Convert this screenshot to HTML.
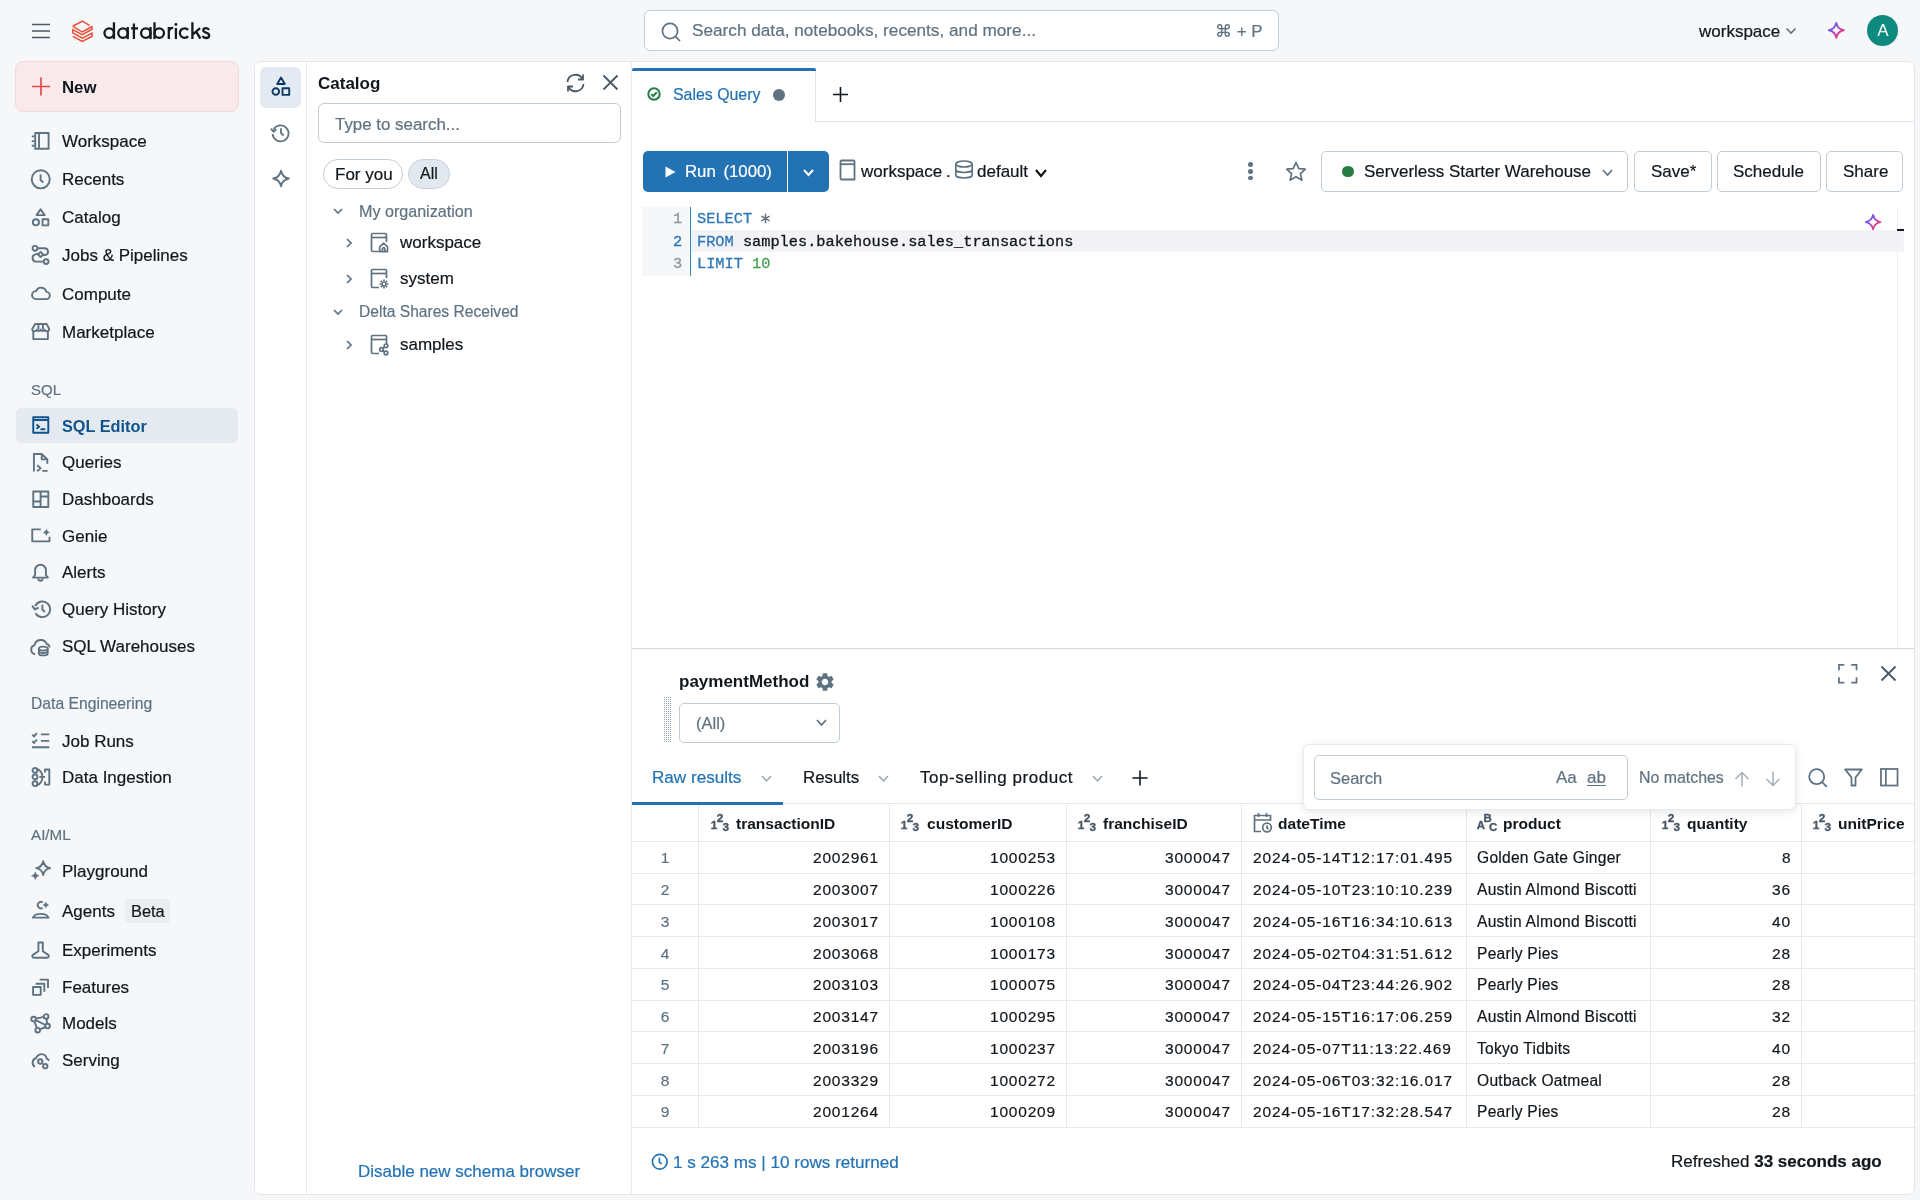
<!DOCTYPE html><html><head><meta charset="utf-8"><style>
html,body{margin:0;padding:0;width:1920px;height:1200px;overflow:hidden;background:#f6f7f9;}
body{position:relative;font-family:"Liberation Sans",sans-serif;}
.t{position:absolute;white-space:pre;line-height:1;-webkit-text-stroke:0.2px currentColor;will-change:transform;}
.b{position:absolute;box-sizing:border-box;}
.i{position:absolute;overflow:visible;will-change:transform;}
</style></head><body>
<svg class="i" style="left:31px;top:22px;" width="20" height="18" viewBox="0 0 20 18" fill="none"><path d="M1 2.5h18M1 9h18M1 15.5h18" stroke="#4a5866" stroke-width="1.7"/></svg>
<svg class="i" style="left:72px;top:19.7px;" width="22" height="23" viewBox="0 0 22 23" fill="none"><g stroke="#ec4b33" stroke-width="1.45" stroke-linejoin="miter" fill="none"><path d="M0.8 6.26 L10.35 1.17 L17.5 5.3"/><path d="M20.1 6.5 L10.35 12 L0.8 6.26"/><path d="M20.1 6.5 V9.2 L10.35 14.6 L0.8 9.6 V12.9 L10.35 18.1 L20.1 13.2 V16.2 L10.35 21.5 L0.8 16.3"/></g></svg>
<svg class="i" style="left:100px;top:20px" width="115" height="22" viewBox="0 0 115 22" fill="none"><g stroke="#161a1e" stroke-width="2.3" fill="none"><circle cx="9.2" cy="13.05" r="4.75"/><path d="M13.95 2.3 V19.1"/><circle cx="23" cy="13.05" r="4.75"/><path d="M27.75 7.0 V19.1"/><path d="M33.9 3.6 V19.1 M31.1 8.3 H38"/><circle cx="45.8" cy="13.05" r="4.75"/><path d="M50.55 7.0 V19.1"/><path d="M54.5 2.3 V19.1"/><circle cx="59.25" cy="13.05" r="4.75"/><path d="M68.8 7.0 V19.1 M68.8 12.6 C68.8 9.2 70.6 7.8 73.2 7.9"/><path d="M75.9 8.0 V19.1"/><path d="M88.13 9.87 A4.75 4.75 0 1 0 88.13 16.23"/><path d="M92.4 2.3 V19.1 M100.1 8.2 L93.2 14.1 M96.2 11.6 L100.4 18.6"/><path d="M109 10 C108.4 8.6 107.3 8.2 106.1 8.2 C104.4 8.2 103.3 9 103.3 10.3 C103.3 11.7 104.6 12.2 106.1 12.6 C108 13.1 109.2 13.8 109.2 15.5 C109.2 17.1 107.8 18 106 18 C104.4 18 103.2 17.3 102.6 16.1"/></g><circle cx="75.9" cy="4.4" r="1.45" fill="#161a1e"/></svg>
<div class="b" style="left:644px;top:10px;width:635px;height:41px;background:#fff;border:1px solid #c0ccd6;border-radius:6px;"></div>
<svg class="i" style="left:661px;top:22px;" width="20" height="20" viewBox="0 0 20 20" fill="none"><circle cx="9" cy="9" r="7.6" stroke="#5f7281" stroke-width="1.7"/><path d="M14.6 14.6 L19 19" stroke="#5f7281" stroke-width="1.7"/></svg>
<div class="t" style="left:691.50px;top:22.44px;font-size:17.2px;color:#5f7281;font-weight:400;font-family:'Liberation Sans', sans-serif;">Search data, notebooks, recents, and more...</div>
<div class="t" style="right:657.50px;top:22.61px;font-size:17px;color:#5f7281;font-weight:400;font-family:'Liberation Sans', sans-serif;text-align:right;">⌘ + P</div>
<div class="t" style="left:1698.50px;top:22.61px;font-size:17px;color:#11171c;font-weight:400;font-family:'Liberation Sans', sans-serif;">workspace</div>
<svg class="i" style="left:1785px;top:27px;" width="12" height="8" viewBox="0 0 12 8" fill="none"><path d="M1.5 1.5 L6 6 L10.5 1.5" stroke="#5f7281" stroke-width="1.6"/></svg>
<svg class="i" style="left:1826.9px;top:20.95px" width="18.6" height="18.6" viewBox="0 0 18.6 18.6" fill="none"><defs><linearGradient id="g1" x1="0.15" y1="0.15" x2="0.85" y2="0.85"><stop offset="0" stop-color="#4b6ee6"/><stop offset="0.5" stop-color="#b23fd2"/><stop offset="1" stop-color="#f2415a"/></linearGradient></defs><path d="M9.3 1.9000000000000004 C10.188 6.34 12.260000000000002 8.412 16.700000000000003 9.3 C12.260000000000002 10.188 10.188 12.260000000000002 9.3 16.700000000000003 C8.412 12.260000000000002 6.34 10.188 1.9000000000000004 9.3 C6.34 8.412 8.412 6.34 9.3 1.9000000000000004 Z" stroke="url(#g1)" stroke-width="1.9" stroke-linejoin="round"/></svg>
<div class="b" style="left:1867px;top:15px;width:31px;height:31px;background:#0f8a7e;border-radius:50%;"></div>
<div class="t" style="left:1882.50px;top:22.11px;font-size:17px;color:#fff;font-weight:400;font-family:'Liberation Sans', sans-serif;transform:translateX(-50%);-webkit-text-stroke:0;">A</div>
<div class="b" style="left:15px;top:61px;width:224px;height:51px;background:#f9e9ea;border:1px solid #f4dadc;border-radius:8px;"></div>
<svg class="i" style="left:31px;top:77px;" width="20" height="19" viewBox="0 0 20 19" fill="none"><path d="M10 0.5 V18.5 M1 9.5 H19" stroke="#e5484d" stroke-width="1.7"/></svg>
<div class="t" style="left:61.50px;top:79.78px;font-size:16.8px;color:#11171c;font-weight:700;font-family:'Liberation Sans', sans-serif;-webkit-text-stroke:0;">New</div>
<svg class="i" style="left:31px;top:131.8px;" width="20" height="20" viewBox="0 0 20 20" fill="none"><g stroke="#5f7281" stroke-width="1.9" fill="none" stroke-linejoin="round" stroke-linecap="butt"><rect x="4.2" y="1" width="13.4" height="15.8"/><path d="M8 1 V16.8 M0.8 4.4 H3.4 M0.8 9.1 H3.4 M0.8 13.8 H3.4"/></g></svg>
<div class="t" style="left:61.50px;top:132.91px;font-size:17px;color:#11171c;font-weight:400;font-family:'Liberation Sans', sans-serif;">Workspace</div>
<svg class="i" style="left:31px;top:169.6px;" width="20" height="20" viewBox="0 0 20 20" fill="none"><g stroke="#5f7281" stroke-width="1.9" fill="none" stroke-linejoin="round" stroke-linecap="butt"><circle cx="9.75" cy="9.35" r="9.05"/><path d="M9.6 4.4 V10.3 L12.4 12.4"/></g></svg>
<div class="t" style="left:61.50px;top:170.71px;font-size:17px;color:#11171c;font-weight:400;font-family:'Liberation Sans', sans-serif;">Recents</div>
<svg class="i" style="left:31px;top:207.5px;" width="20" height="20" viewBox="0 0 20 20" fill="none"><g stroke="#5f7281" stroke-width="1.9" fill="none" stroke-linejoin="round" stroke-linecap="butt"><path d="M9.6 1.2 L13.6 7.1 H5.6 Z"/><circle cx="4.9" cy="14.3" r="3.1"/><rect x="11.5" y="11.25" width="5.8" height="6.1"/></g></svg>
<div class="t" style="left:61.50px;top:208.61px;font-size:17px;color:#11171c;font-weight:400;font-family:'Liberation Sans', sans-serif;">Catalog</div>
<svg class="i" style="left:31px;top:246.2px;" width="20" height="20" viewBox="0 0 20 20" fill="none"><g stroke="#5f7281" stroke-width="1.9" fill="none" stroke-linejoin="round" stroke-linecap="butt"><circle cx="4" cy="2.3" r="2.4"/><circle cx="15.1" cy="15.6" r="2.4"/><path d="M6.4 2.3 H13.6 A3.4 3.4 0 0 1 15 8.8 L12.1 9.4"/><path d="M9.6 5.9 L12.2 8.5 L9.6 11.1 L7 8.5 Z"/><path d="M7.1 7.6 L4.4 8.3 A3.7 3.7 0 0 0 5.2 15.6 H12.7"/></g></svg>
<div class="t" style="left:61.50px;top:247.31px;font-size:17px;color:#11171c;font-weight:400;font-family:'Liberation Sans', sans-serif;">Jobs &amp; Pipelines</div>
<svg class="i" style="left:31px;top:284.4px;" width="20" height="20" viewBox="0 0 20 20" fill="none"><g stroke="#5f7281" stroke-width="1.9" fill="none" stroke-linejoin="round" stroke-linecap="butt"><path d="M5 15.1 H15 A3.6 3.6 0 0 0 15.4 7.9 A5.4 5.4 0 0 0 5.1 7.1 A4 4 0 0 0 5 15.1 Z"/></g></svg>
<div class="t" style="left:61.50px;top:285.51px;font-size:17px;color:#11171c;font-weight:400;font-family:'Liberation Sans', sans-serif;">Compute</div>
<svg class="i" style="left:31px;top:322.4px;" width="20" height="20" viewBox="0 0 20 20" fill="none"><g stroke="#5f7281" stroke-width="1.9" fill="none" stroke-linejoin="round" stroke-linecap="butt"><path d="M4.2 2 H15.6 L18.2 6.9 A2.3 2.3 0 0 1 13.7 7.7 A2.2 2.2 0 0 1 9.7 7.7 A2.2 2.2 0 0 1 5.7 7.7 A2.3 2.3 0 0 1 1.2 6.9 Z"/><path d="M2.3 8.6 V17.1 H16.9 V8.6 M7.4 2 V7.4 M11.9 2 V7.4"/></g></svg>
<div class="t" style="left:61.50px;top:323.51px;font-size:17px;color:#11171c;font-weight:400;font-family:'Liberation Sans', sans-serif;">Marketplace</div>
<div class="t" style="left:31.25px;top:381.70px;font-size:15px;color:#5f7281;font-weight:400;font-family:'Liberation Sans', sans-serif;">SQL</div>
<div class="b" style="left:15.5px;top:408px;width:222px;height:35px;background:#e5eaf1;border-radius:5px;"></div>
<svg class="i" style="left:31px;top:416.4px;" width="20" height="20" viewBox="0 0 20 20" fill="none"><g stroke="#0e538b" stroke-width="1.9" fill="none" stroke-linejoin="round" stroke-linecap="butt"><rect x="2.25" y="1.2" width="15.05" height="15.5"/><path d="M2.25 4 H17.3 M5.5 8.6 L8.2 10.7 L5.5 12.8 M9.5 13.2 H14.3"/></g></svg>
<div class="t" style="left:61.50px;top:418.10px;font-size:16.3px;color:#0e538b;font-weight:700;font-family:'Liberation Sans', sans-serif;-webkit-text-stroke:0;">SQL Editor</div>
<svg class="i" style="left:31px;top:453.25px;" width="20" height="20" viewBox="0 0 20 20" fill="none"><g stroke="#5f7281" stroke-width="1.9" fill="none" stroke-linejoin="round" stroke-linecap="butt"><path d="M2.9 18.6 V0.95 H10.75 L16.3 6.4 V10.8 M10.75 0.95 V6.4 H16.3"/><path d="M6.2 12.2 L9.6 15.2 L6.2 18.2 M11.3 17.9 H16.6"/></g></svg>
<div class="t" style="left:61.50px;top:454.36px;font-size:17px;color:#11171c;font-weight:400;font-family:'Liberation Sans', sans-serif;">Queries</div>
<svg class="i" style="left:31px;top:489.75px;" width="20" height="20" viewBox="0 0 20 20" fill="none"><g stroke="#5f7281" stroke-width="1.9" fill="none" stroke-linejoin="round" stroke-linecap="butt"><rect x="2.25" y="1.5" width="15.05" height="15.5"/><path d="M9.6 1.5 V17 M2.25 11.45 H9.6 M9.6 6.45 H17.3"/></g></svg>
<div class="t" style="left:61.50px;top:490.86px;font-size:17px;color:#11171c;font-weight:400;font-family:'Liberation Sans', sans-serif;">Dashboards</div>
<svg class="i" style="left:31px;top:526.4px;" width="20" height="20" viewBox="0 0 20 20" fill="none"><g stroke="#5f7281" stroke-width="1.9" fill="none" stroke-linejoin="round" stroke-linecap="butt"><path d="M9.8 3.35 H1.25 V15.35 H18.5 V10.8"/><path d="M15.4 2.4 C15.790000000000001 4.35 17.35 5.91 19.3 6.3 C17.35 6.6899999999999995 15.790000000000001 8.25 15.4 10.2 C15.01 8.25 13.450000000000001 6.6899999999999995 11.5 6.3 C13.450000000000001 5.91 15.01 4.35 15.4 2.4 Z" fill="#5f7281" stroke="none"/></g></svg>
<div class="t" style="left:61.50px;top:527.51px;font-size:17px;color:#11171c;font-weight:400;font-family:'Liberation Sans', sans-serif;">Genie</div>
<svg class="i" style="left:31px;top:563.25px;" width="20" height="20" viewBox="0 0 20 20" fill="none"><g stroke="#5f7281" stroke-width="1.9" fill="none" stroke-linejoin="round" stroke-linecap="butt"><path d="M4.1 12 V7.1 A5.4 5.4 0 0 1 14.9 7.1 V12 L16.9 14.6 H2.1 Z"/><path d="M7.3 15.5 A2.2 2.2 0 0 0 11.7 15.5"/></g></svg>
<div class="t" style="left:61.50px;top:564.36px;font-size:17px;color:#11171c;font-weight:400;font-family:'Liberation Sans', sans-serif;">Alerts</div>
<svg class="i" style="left:31px;top:600.1px;" width="20" height="20" viewBox="0 0 20 20" fill="none"><g stroke="#5f7281" stroke-width="1.9" fill="none" stroke-linejoin="round" stroke-linecap="butt"><path d="M4.2 6.2 A7.8 7.8 0 1 1 4.6 13.2"/><path d="M1.2 5.6 L3.8 9.4 L7.6 7.6"/><path d="M11.4 4.8 V9.5 L13.9 12"/></g></svg>
<div class="t" style="left:61.50px;top:601.21px;font-size:17px;color:#11171c;font-weight:400;font-family:'Liberation Sans', sans-serif;">Query History</div>
<svg class="i" style="left:31px;top:637.0px;" width="20" height="20" viewBox="0 0 20 20" fill="none"><g stroke="#5f7281" stroke-width="1.9" fill="none" stroke-linejoin="round" stroke-linecap="butt"><path d="M4.2 17.2 A4.6 4.6 0 0 1 3.6 8.2 A6.3 6.3 0 0 1 15.6 6.8 A4 4 0 0 1 18.6 10.5"/><ellipse cx="12.3" cy="11.6" rx="4.4" ry="2"/><path d="M7.9 11.6 V16.4 A4.4 2 0 0 0 16.7 16.4 V11.6 M7.9 14 A4.4 2 0 0 0 16.7 14"/></g></svg>
<div class="t" style="left:61.50px;top:638.11px;font-size:17px;color:#11171c;font-weight:400;font-family:'Liberation Sans', sans-serif;">SQL Warehouses</div>
<div class="t" style="left:31.25px;top:695.71px;font-size:15.7px;color:#5f7281;font-weight:400;font-family:'Liberation Sans', sans-serif;">Data Engineering</div>
<svg class="i" style="left:31px;top:731.4px;" width="20" height="20" viewBox="0 0 20 20" fill="none"><g stroke="#5f7281" stroke-width="1.9" fill="none" stroke-linejoin="round" stroke-linecap="butt"><path d="M1.3 3.6 L2.9 5.5 L5.9 2.2 M1.3 10 L2.9 11.9 L5.9 8.6 M9.9 3.35 H18.3 M9.9 9.9 H18.3 M1 16.2 H18.3"/></g></svg>
<div class="t" style="left:61.50px;top:732.51px;font-size:17px;color:#11171c;font-weight:400;font-family:'Liberation Sans', sans-serif;">Job Runs</div>
<svg class="i" style="left:31px;top:768.0px;" width="20" height="20" viewBox="0 0 20 20" fill="none"><g stroke="#5f7281" stroke-width="1.9" fill="none" stroke-linejoin="round" stroke-linecap="butt"><circle cx="4" cy="2.4" r="2.4"/><circle cx="4" cy="8.9" r="2.4"/><circle cx="4" cy="15.7" r="2.4"/><path d="M5.5 0.6 A9 9 0 0 1 5.5 17.5 M8.3 8.9 H14 M14 4.5 V1.5 H18.3 V16.6 H14 V13.5"/></g></svg>
<div class="t" style="left:61.50px;top:769.11px;font-size:17px;color:#11171c;font-weight:400;font-family:'Liberation Sans', sans-serif;">Data Ingestion</div>
<div class="t" style="left:31.25px;top:827.13px;font-size:15.2px;color:#5f7281;font-weight:400;font-family:'Liberation Sans', sans-serif;">AI/ML</div>
<svg class="i" style="left:31px;top:861.4px;" width="20" height="20" viewBox="0 0 20 20" fill="none"><g stroke="#5f7281" stroke-width="1.9" fill="none" stroke-linejoin="round" stroke-linecap="butt"><path d="M12.2 0.1999999999999993 C12.889999999999999 3.6499999999999995 15.649999999999999 6.409999999999999 19.1 7.1 C15.649999999999999 7.79 12.889999999999999 10.55 12.2 14.0 C11.51 10.55 8.75 7.79 5.299999999999999 7.1 C8.75 6.409999999999999 11.51 3.6499999999999995 12.2 0.1999999999999993 Z"/><path d="M4.3 10.899999999999999 C4.68 12.799999999999999 6.199999999999999 14.319999999999999 8.1 14.7 C6.199999999999999 15.08 4.68 16.599999999999998 4.3 18.5 C3.92 16.599999999999998 2.4 15.08 0.5 14.7 C2.4 14.319999999999999 3.92 12.799999999999999 4.3 10.899999999999999 Z" fill="#5f7281" stroke="#5f7281" stroke-width="0.6"/></g></svg>
<div class="t" style="left:61.50px;top:862.51px;font-size:17px;color:#11171c;font-weight:400;font-family:'Liberation Sans', sans-serif;">Playground</div>
<svg class="i" style="left:31px;top:901.4px;" width="20" height="20" viewBox="0 0 20 20" fill="none"><g stroke="#5f7281" stroke-width="1.9" fill="none" stroke-linejoin="round" stroke-linecap="butt"><path d="M11.6 6.9 A3.2 3.2 0 1 1 11.6 1.4"/><path d="M1.8 16.6 A8.3 5.4 0 0 1 17.6 16.6 Z"/><path d="M14.8 0.5999999999999996 C15.15 2.3499999999999996 16.55 3.7499999999999996 18.3 4.1 C16.55 4.449999999999999 15.15 5.85 14.8 7.6 C14.450000000000001 5.85 13.05 4.449999999999999 11.3 4.1 C13.05 3.7499999999999996 14.450000000000001 2.3499999999999996 14.8 0.5999999999999996 Z" fill="#5f7281" stroke="none"/></g></svg>
<div class="t" style="left:61.50px;top:902.51px;font-size:17px;color:#11171c;font-weight:400;font-family:'Liberation Sans', sans-serif;">Agents</div>
<svg class="i" style="left:31px;top:940.75px;" width="20" height="20" viewBox="0 0 20 20" fill="none"><g stroke="#5f7281" stroke-width="1.9" fill="none" stroke-linejoin="round" stroke-linecap="butt"><path d="M7.4 10.2 V1.5 H11.8 V10.2 L16.9 13.6 A1.7 1.7 0 0 1 16 16.8 H3.1 A1.7 1.7 0 0 1 2.2 13.6 Z"/></g></svg>
<div class="t" style="left:61.50px;top:941.86px;font-size:17px;color:#11171c;font-weight:400;font-family:'Liberation Sans', sans-serif;">Experiments</div>
<svg class="i" style="left:31px;top:977.6px;" width="20" height="20" viewBox="0 0 20 20" fill="none"><g stroke="#5f7281" stroke-width="1.9" fill="none" stroke-linejoin="round" stroke-linecap="butt"><rect x="2.1" y="9" width="7.65" height="7.9"/><path d="M4.7 5.7 H13.3 V13.8 M8.7 1.6 H17 V10"/></g></svg>
<div class="t" style="left:61.50px;top:978.71px;font-size:17px;color:#11171c;font-weight:400;font-family:'Liberation Sans', sans-serif;">Features</div>
<svg class="i" style="left:31px;top:1014.25px;" width="20" height="20" viewBox="0 0 20 20" fill="none"><g stroke="#5f7281" stroke-width="1.9" fill="none" stroke-linejoin="round" stroke-linecap="butt"><circle cx="2.6" cy="5.05" r="2.3"/><circle cx="15.1" cy="2.45" r="2.3"/><circle cx="16.6" cy="12.05" r="2.3"/><circle cx="6.7" cy="16.15" r="2.3"/><path d="M4.8 4.6 L12.9 2.9 M4.6 6.1 L14.6 11 M3.3 7.3 L5.9 13.9 M15.5 4.7 L16.2 9.8 M14.5 13 L8.9 15.3"/></g></svg>
<div class="t" style="left:61.50px;top:1015.36px;font-size:17px;color:#11171c;font-weight:400;font-family:'Liberation Sans', sans-serif;">Models</div>
<svg class="i" style="left:31px;top:1051.1px;" width="20" height="20" viewBox="0 0 20 20" fill="none"><g stroke="#5f7281" stroke-width="1.9" fill="none" stroke-linejoin="round" stroke-linecap="butt"><path d="M3.8 15.9 C0.4 13.6 1.1 8.2 5 7.3 C6.2 3.3 11.6 1.6 14.5 4.9 C15.2 5.8 15.6 6.8 15.7 7.6 L18.3 9.6"/><circle cx="9.3" cy="10.5" r="2.2"/><circle cx="14.25" cy="15.2" r="2.2"/></g></svg>
<div class="t" style="left:61.50px;top:1052.21px;font-size:17px;color:#11171c;font-weight:400;font-family:'Liberation Sans', sans-serif;">Serving</div>
<div class="b" style="left:125px;top:898.5px;width:45px;height:24px;background:#ebeef1;border-radius:4px;"></div>
<div class="t" style="left:130.60px;top:903.02px;font-size:16.4px;color:#11171c;font-weight:400;font-family:'Liberation Sans', sans-serif;">Beta</div>
<div class="b" style="left:254px;top:61px;width:1661px;height:1134px;background:#fff;border:1px solid #e4e6e9;border-radius:7px;"></div>
<div class="b" style="left:306px;top:62px;width:1px;height:1132px;background:#e8eaec;"></div>
<div class="b" style="left:260px;top:67px;width:41px;height:41px;background:#e4eaf1;border-radius:6px;"></div>
<svg class="i" style="left:271px;top:76px;" width="20" height="21" viewBox="0 0 20 21" fill="none"><g stroke="#0e3b66" stroke-width="1.9" fill="none" stroke-linejoin="round"><path d="M10 1.5 L13.8 8 H6.2 Z"/><circle cx="4.8" cy="15.5" r="3.3"/><rect x="11.5" y="12.2" width="6.7" height="6.7"/></g></svg>
<svg class="i" style="left:270px;top:123px;" width="21" height="20" viewBox="0 0 21 20" fill="none"><g stroke="#5f7281" stroke-width="1.8" fill="none" stroke-linejoin="round"><path d="M3.6 6.5 A8 8 0 1 1 2.6 11"/><path d="M1 5.6 L3.5 8.8 L6.4 6.3"/><path d="M11 5.2 V10 L13.6 12.6"/></g></svg>
<svg class="i" style="left:270px;top:168px;" width="22" height="22" viewBox="0 0 22 22" fill="none"><path d="M11 2.7 C11.78 6.6 14.9 9.72 18.8 10.5 C14.9 11.28 11.78 14.4 11 18.3 C10.22 14.4 7.1 11.28 3.2 10.5 C7.1 9.72 10.22 6.6 11 2.7 Z" stroke="#5f7281" stroke-width="1.8" stroke-linejoin="round"/></svg>
<div class="b" style="left:631px;top:62px;width:1px;height:1132px;background:#e8eaec;"></div>
<div class="t" style="left:318.40px;top:74.61px;font-size:17px;color:#11171c;font-weight:700;font-family:'Liberation Sans', sans-serif;-webkit-text-stroke:0;">Catalog</div>
<svg class="i" style="left:565px;top:73px;" width="21" height="20" viewBox="0 0 21 20" fill="none"><g stroke="#4a5866" stroke-width="1.8" fill="none"><path d="M2.5 9 A8 8 0 0 1 17.5 6"/><path d="M18.5 11 A8 8 0 0 1 3.5 14"/><path d="M18 1.5 V6.5 H13" stroke-linejoin="round"/><path d="M3 18.5 V13.5 H8" stroke-linejoin="round"/></g></svg>
<svg class="i" style="left:602px;top:74px;" width="17" height="17" viewBox="0 0 17 17" fill="none"><path d="M1.5 1.5 L15.5 15.5 M15.5 1.5 L1.5 15.5" stroke="#4a5866" stroke-width="1.8"/></svg>
<div class="b" style="left:318px;top:103px;width:303px;height:40px;background:#fff;border:1px solid #c0ccd6;border-radius:6px;"></div>
<div class="t" style="left:334.70px;top:116.89px;font-size:16.9px;color:#5f7281;font-weight:400;font-family:'Liberation Sans', sans-serif;">Type to search...</div>
<div class="b" style="left:323px;top:159px;width:80px;height:30px;background:#fff;border:1px solid #c0ccd6;border-radius:15px;"></div>
<div class="t" style="left:334.70px;top:165.61px;font-size:17px;color:#11171c;font-weight:400;font-family:'Liberation Sans', sans-serif;">For you</div>
<div class="b" style="left:408px;top:159px;width:42px;height:30px;background:#e2e8ef;border:1px solid #c8d2dc;border-radius:15px;"></div>
<div class="t" style="left:420.00px;top:166.46px;font-size:16px;color:#11171c;font-weight:400;font-family:'Liberation Sans', sans-serif;">All</div>
<svg class="i" style="left:333px;top:207.5px;" width="10" height="6" viewBox="0 0 10 6" fill="none"><path d="M1 1 L5.0 5 L9 1" stroke="#5f7281" stroke-width="1.7" fill="none"/></svg>
<div class="t" style="left:358.70px;top:202.62px;font-size:16.1px;color:#5f7281;font-weight:400;font-family:'Liberation Sans', sans-serif;">My organization</div>
<svg class="i" style="left:345.5px;top:238px;" width="6" height="10" viewBox="0 0 6 10" fill="none"><path d="M1 1 L5 5.0 L1 9" stroke="#5f7281" stroke-width="1.7" fill="none"/></svg>
<svg class="i" style="left:370px;top:232px;" width="19" height="21" viewBox="0 0 19 21" fill="none"><g stroke="#5f7281" stroke-width="1.7" fill="none" stroke-linejoin="round"><path d="M9 19.5 H2.8 A1.3 1.3 0 0 1 1.5 18.2 V2.5 A1 1 0 0 1 2.5 1.5 H15.5 A1 1 0 0 1 16.5 2.5 V10"/><path d="M1.5 5.5 H16.5"/><path d="M9.7 19.6 V14.8 L13.6 11.2 L17.5 14.8 V19.6 Z"/><path d="M12.4 19.6 V16.9 A1.2 1.2 0 0 1 14.8 16.9 V19.6"/></g></svg>
<div class="t" style="left:399.50px;top:234.11px;font-size:17px;color:#11171c;font-weight:400;font-family:'Liberation Sans', sans-serif;">workspace</div>
<svg class="i" style="left:345.5px;top:274px;" width="6" height="10" viewBox="0 0 6 10" fill="none"><path d="M1 1 L5 5.0 L1 9" stroke="#5f7281" stroke-width="1.7" fill="none"/></svg>
<svg class="i" style="left:370px;top:268px;" width="19" height="21" viewBox="0 0 19 21" fill="none"><g stroke="#5f7281" stroke-width="1.7" fill="none" stroke-linejoin="round"><path d="M9 19.5 H2.8 A1.3 1.3 0 0 1 1.5 18.2 V2.5 A1 1 0 0 1 2.5 1.5 H15.5 A1 1 0 0 1 16.5 2.5 V10"/><path d="M1.5 5.5 H16.5"/><circle cx="14" cy="16" r="2"/><path d="M14 11.5 V13 M14 19 V20.5 M9.5 16 H11 M17 16 H18.5 M10.8 12.8 L11.9 13.9 M16.1 18.1 L17.2 19.2 M10.8 19.2 L11.9 18.1 M16.1 13.9 L17.2 12.8"/></g></svg>
<div class="t" style="left:399.50px;top:269.81px;font-size:17px;color:#11171c;font-weight:400;font-family:'Liberation Sans', sans-serif;">system</div>
<svg class="i" style="left:333px;top:308.5px;" width="10" height="6" viewBox="0 0 10 6" fill="none"><path d="M1 1 L5.0 5 L9 1" stroke="#5f7281" stroke-width="1.7" fill="none"/></svg>
<div class="t" style="left:358.70px;top:303.54px;font-size:15.6px;color:#5f7281;font-weight:400;font-family:'Liberation Sans', sans-serif;">Delta Shares Received</div>
<svg class="i" style="left:345.5px;top:340px;" width="6" height="10" viewBox="0 0 6 10" fill="none"><path d="M1 1 L5 5.0 L1 9" stroke="#5f7281" stroke-width="1.7" fill="none"/></svg>
<svg class="i" style="left:370px;top:334px;" width="19" height="21" viewBox="0 0 19 21" fill="none"><g stroke="#5f7281" stroke-width="1.7" fill="none" stroke-linejoin="round"><path d="M9 19.5 H2.8 A1.3 1.3 0 0 1 1.5 18.2 V2.5 A1 1 0 0 1 2.5 1.5 H15.5 A1 1 0 0 1 16.5 2.5 V10"/><path d="M1.5 5.5 H16.5"/><circle cx="16" cy="11.8" r="1.8"/><circle cx="11.5" cy="15.5" r="1.8"/><circle cx="16" cy="19" r="1.8"/><path d="M13 14.6 L14.6 12.8 M13 16.5 L14.6 18.2"/></g></svg>
<div class="t" style="left:399.50px;top:336.11px;font-size:17px;color:#11171c;font-weight:400;font-family:'Liberation Sans', sans-serif;">samples</div>
<div class="t" style="left:358.00px;top:1163.21px;font-size:17px;color:#2272b4;font-weight:400;font-family:'Liberation Sans', sans-serif;">Disable new schema browser</div>
<div class="b" style="left:815px;top:121px;width:1099px;height:1px;background:#dde3e8;"></div>
<div class="b" style="left:815px;top:70px;width:1px;height:52px;background:#dde3e8;"></div>
<div class="b" style="left:632px;top:68px;width:184px;height:3px;background:#2272b4;border-radius:2px 2px 0 0;"></div>
<svg class="i" style="left:647px;top:87px;" width="14" height="14" viewBox="0 0 14 14" fill="none"><circle cx="7" cy="7" r="5.7" stroke="#277c43" stroke-width="2" fill="none"/><path d="M4.2 7.1 L6.2 9.1 L9.8 5.3" stroke="#277c43" stroke-width="2" fill="none"/></svg>
<div class="t" style="left:672.50px;top:86.54px;font-size:15.9px;color:#2272b4;font-weight:400;font-family:'Liberation Sans', sans-serif;">Sales Query</div>
<div class="b" style="left:773px;top:88.5px;width:12px;height:12px;background:#5f7281;border-radius:50%;"></div>
<svg class="i" style="left:832px;top:86px;" width="17" height="17" viewBox="0 0 17 17" fill="none"><path d="M8.5 1 V16 M1 8.5 H16" stroke="#11171c" stroke-width="1.6"/></svg>
<div class="b" style="left:642.5px;top:151px;width:186px;height:41px;background:#2272b4;border-radius:5px;"></div>
<svg class="i" style="left:664px;top:165px;" width="13" height="14" viewBox="0 0 13 14" fill="none"><path d="M1.5 1.5 L11.5 7 L1.5 12.5 Z" fill="#fff"/></svg>
<div class="t" style="left:685.00px;top:163.78px;font-size:16.8px;color:#fff;font-weight:400;font-family:'Liberation Sans', sans-serif;word-spacing:3px;">Run (1000)</div>
<div class="b" style="left:786.5px;top:151px;width:1.3px;height:41px;background:#fff;"></div>
<svg class="i" style="left:802.5px;top:168.5px;" width="11" height="7" viewBox="0 0 11 7" fill="none"><path d="M1 1 L5.5 6 L10 1" stroke="#fff" stroke-width="2" fill="none"/></svg>
<svg class="i" style="left:839px;top:158.5px;" width="17" height="22" viewBox="0 0 17 22" fill="none"><g stroke="#5f7281" stroke-width="1.8" fill="none" stroke-linejoin="round"><path d="M2.8 20.5 A1.3 1.3 0 0 1 1.5 19.2 V2.5 A1 1 0 0 1 2.5 1.5 H14.5 A1 1 0 0 1 15.5 2.5 V20.5 Z"/><path d="M1.5 5.2 H15.5"/></g></svg>
<div class="t" style="left:861.25px;top:162.51px;font-size:17px;color:#11171c;font-weight:400;font-family:'Liberation Sans', sans-serif;">workspace</div>
<div class="t" style="left:946.00px;top:162.51px;font-size:17px;color:#11171c;font-weight:400;font-family:'Liberation Sans', sans-serif;">.</div>
<svg class="i" style="left:953.5px;top:159.5px;" width="20" height="19" viewBox="0 0 20 19" fill="none"><g stroke="#5f7281" stroke-width="1.7" fill="none"><ellipse cx="10" cy="4" rx="8.2" ry="3"/><path d="M1.8 4 V15 A8.2 3 0 0 0 18.2 15 V4 M1.8 9.5 A8.2 3 0 0 0 18.2 9.5"/></g></svg>
<div class="t" style="left:977.00px;top:162.51px;font-size:17px;color:#11171c;font-weight:400;font-family:'Liberation Sans', sans-serif;">default</div>
<svg class="i" style="left:1034.5px;top:168.5px;" width="12" height="8" viewBox="0 0 12 8" fill="none"><path d="M1 1 L6.0 7 L11 1" stroke="#11171c" stroke-width="2.2" fill="none"/></svg>
<div class="b" style="left:1248px;top:162.29999999999998px;width:4.6px;height:4.6px;background:#5f7281;border-radius:50%;"></div>
<div class="b" style="left:1248px;top:168.95px;width:4.6px;height:4.6px;background:#5f7281;border-radius:50%;"></div>
<div class="b" style="left:1248px;top:175.6px;width:4.6px;height:4.6px;background:#5f7281;border-radius:50%;"></div>
<svg class="i" style="left:1285px;top:160.5px;" width="22" height="21" viewBox="0 0 22 21" fill="none"><path d="M11 1.5 L13.8 7.6 L20.3 8.2 L15.4 12.6 L16.9 19.2 L11 15.8 L5.1 19.2 L6.6 12.6 L1.7 8.2 L8.2 7.6 Z" stroke="#5f7281" stroke-width="1.7" stroke-linejoin="round" fill="none"/></svg>
<div class="b" style="left:1321px;top:151px;width:307px;height:41px;background:#fff;border:1px solid #c0ccd6;border-radius:5px;"></div>
<div class="b" style="left:1342.2px;top:165.5px;width:11.7px;height:11.7px;background:#277c43;border-radius:50%;"></div>
<div class="t" style="left:1363.75px;top:163.11px;font-size:17px;color:#11171c;font-weight:400;font-family:'Liberation Sans', sans-serif;">Serverless Starter Warehouse</div>
<svg class="i" style="left:1601.5px;top:168.5px;" width="11" height="7" viewBox="0 0 11 7" fill="none"><path d="M1 1 L5.5 6 L10 1" stroke="#5f7281" stroke-width="1.6" fill="none"/></svg>
<div class="b" style="left:1634px;top:151px;width:77.5px;height:41px;background:#fff;border:1px solid #c0ccd6;border-radius:5px;"></div>
<div class="t" style="left:1651.00px;top:163.11px;font-size:17px;color:#11171c;font-weight:400;font-family:'Liberation Sans', sans-serif;">Save*</div>
<div class="b" style="left:1717px;top:151px;width:103.59999999999991px;height:41px;background:#fff;border:1px solid #c0ccd6;border-radius:5px;"></div>
<div class="t" style="left:1733.40px;top:163.11px;font-size:17px;color:#11171c;font-weight:400;font-family:'Liberation Sans', sans-serif;">Schedule</div>
<div class="b" style="left:1826px;top:151px;width:77px;height:41px;background:#fff;border:1px solid #c0ccd6;border-radius:5px;"></div>
<div class="t" style="left:1843.00px;top:163.11px;font-size:17px;color:#11171c;font-weight:400;font-family:'Liberation Sans', sans-serif;">Share</div>
<div class="b" style="left:641.6px;top:207px;width:47px;height:69px;background:#f6f7f9;"></div>
<div class="b" style="left:689.5px;top:207px;width:1.6px;height:69px;background:#3b82c4;"></div>
<div class="b" style="left:691.1px;top:230px;width:1212.6px;height:22px;background:#f2f2f7;"></div>
<svg class="i" style="left:1863.9px;top:213.1px" width="18.2" height="18.2" viewBox="0 0 18.2 18.2" fill="none"><defs><linearGradient id="g2" x1="0.15" y1="0.15" x2="0.85" y2="0.85"><stop offset="0" stop-color="#4b6ee6"/><stop offset="0.5" stop-color="#b23fd2"/><stop offset="1" stop-color="#f2415a"/></linearGradient></defs><path d="M9.1 1.7999999999999998 C9.975999999999999 6.18 12.02 8.224 16.4 9.1 C12.02 9.975999999999999 9.975999999999999 12.02 9.1 16.4 C8.224 12.02 6.18 9.975999999999999 1.7999999999999998 9.1 C6.18 8.224 8.224 6.18 9.1 1.7999999999999998 Z" stroke="url(#g2)" stroke-width="1.8" stroke-linejoin="round"/></svg>
<div class="b" style="left:1896.5px;top:207px;width:1px;height:441px;background:#eceef1;"></div>
<div class="b" style="left:1896.5px;top:229px;width:7.2px;height:2px;background:#11171c;"></div>
<div class="t" style="right:1237.50px;top:211.77px;font-size:15.3px;color:#8b949e;font-weight:400;font-family:'Liberation Mono', monospace;text-align:right;-webkit-text-stroke:0.3px currentColor;">1</div>
<div class="t" style="right:1237.50px;top:234.52px;font-size:15.3px;color:#2272b4;font-weight:400;font-family:'Liberation Mono', monospace;text-align:right;-webkit-text-stroke:0.3px currentColor;">2</div>
<div class="t" style="right:1237.50px;top:257.02px;font-size:15.3px;color:#8b949e;font-weight:400;font-family:'Liberation Mono', monospace;text-align:right;-webkit-text-stroke:0.3px currentColor;">3</div>
<div class="t" style="left:696.60px;top:211.77px;font-size:15.3px;color:#11171c;font-weight:400;font-family:'Liberation Mono', monospace;-webkit-text-stroke:0.3px currentColor;"><span style="color:#2f78b7">SELECT</span></div>
<svg class="i" style="left:759.5px;top:213px;" width="11" height="11" viewBox="0 0 11 11" fill="none"><path d="M5.5 0.8 V10.2 M1.4 3.1 L9.6 7.9 M1.4 7.9 L9.6 3.1" stroke="#5f7281" stroke-width="1.5"/></svg>
<div class="t" style="left:696.60px;top:234.52px;font-size:15.3px;color:#11171c;font-weight:400;font-family:'Liberation Mono', monospace;-webkit-text-stroke:0.3px currentColor;"><span style="color:#2f78b7">FROM</span> samples.bakehouse.sales_transactions</div>
<div class="t" style="left:696.60px;top:257.02px;font-size:15.3px;color:#11171c;font-weight:400;font-family:'Liberation Mono', monospace;-webkit-text-stroke:0.3px currentColor;"><span style="color:#2f78b7">LIMIT</span> <span style="color:#3f9f4f">10</span></div>
<div class="b" style="left:632px;top:647.5px;width:1282px;height:1.5px;background:#d1d9e1;"></div>
<div class="t" style="left:678.75px;top:673.36px;font-size:17px;color:#11171c;font-weight:700;font-family:'Liberation Sans', sans-serif;-webkit-text-stroke:0;">paymentMethod</div>
<svg class="i" style="left:814px;top:671px;" width="22" height="22" viewBox="0 0 24 24" fill="none"><path fill="#5f7281" d="M19.14 12.94c.04-.3.06-.61.06-.94 0-.32-.02-.64-.07-.94l2.03-1.58a.49.49 0 0 0 .12-.61l-1.92-3.32a.488.488 0 0 0-.59-.22l-2.39.96c-.5-.38-1.03-.7-1.62-.94l-.36-2.54a.484.484 0 0 0-.48-.41h-3.84c-.24 0-.43.17-.47.41l-.36 2.54c-.59.24-1.13.57-1.62.94l-2.39-.96c-.22-.08-.47 0-.59.22L2.74 8.87c-.12.21-.08.47.12.61l2.03 1.58c-.05.3-.09.63-.09.94s.02.64.07.94l-2.03 1.58a.49.49 0 0 0-.12.61l1.92 3.32c.12.22.37.29.59.22l2.39-.96c.5.38 1.03.7 1.62.94l.36 2.54c.05.24.24.41.48.41h3.84c.24 0 .44-.17.47-.41l.36-2.54c.59-.24 1.13-.56 1.62-.94l2.39.96c.22.08.47 0 .59-.22l1.92-3.32c.12-.22.07-.47-.12-.61l-2.01-1.58zM12 15.6c-1.98 0-3.6-1.62-3.6-3.6s1.62-3.6 3.6-3.6 3.6 1.62 3.6 3.6-1.62 3.6-3.6 3.6z"/></svg>
<svg class="i" style="left:664px;top:697px" width="8" height="46" viewBox="0 0 8 46"><defs><pattern id="dots" width="2" height="2" patternUnits="userSpaceOnUse"><rect width="1" height="1" fill="#9aa5b0"/></pattern></defs><rect width="8" height="46" fill="url(#dots)"/></svg>
<div class="b" style="left:678.5px;top:702.5px;width:161.5px;height:40.5px;background:#fff;border:1px solid #c0ccd6;border-radius:5px;"></div>
<div class="t" style="left:695.60px;top:715.43px;font-size:16.5px;color:#5f7281;font-weight:400;font-family:'Liberation Sans', sans-serif;">(All)</div>
<svg class="i" style="left:815.5px;top:719px;" width="11" height="7" viewBox="0 0 11 7" fill="none"><path d="M1 1 L5.5 6 L10 1" stroke="#5f7281" stroke-width="1.7" fill="none"/></svg>
<svg class="i" style="left:1838px;top:663.5px;" width="19.5" height="19.5" viewBox="0 0 20 20" fill="none"><path d="M1 6.5 V1 H6.5 M13.5 1 H19 V6.5 M19 13.5 V19 H13.5 M6.5 19 H1 V13.5" stroke="#5f7281" stroke-width="1.8" fill="none"/></svg>
<svg class="i" style="left:1880px;top:665px;" width="17" height="17" viewBox="0 0 17 17" fill="none"><path d="M1.5 1.5 L15.5 15.5 M15.5 1.5 L1.5 15.5" stroke="#4a5866" stroke-width="1.8"/></svg>
<div class="t" style="left:652.20px;top:768.62px;font-size:17.1px;color:#2272b4;font-weight:400;font-family:'Liberation Sans', sans-serif;">Raw results</div>
<svg class="i" style="left:760.5px;top:774.5px;" width="11" height="7" viewBox="0 0 11 7" fill="none"><path d="M1 1 L5.5 6 L10 1" stroke="#98a4ae" stroke-width="1.5" fill="none"/></svg>
<div class="t" style="left:802.70px;top:769.84px;font-size:16.85px;color:#11171c;font-weight:400;font-family:'Liberation Sans', sans-serif;">Results</div>
<svg class="i" style="left:877.8px;top:774.5px;" width="11" height="7" viewBox="0 0 11 7" fill="none"><path d="M1 1 L5.5 6 L10 1" stroke="#98a4ae" stroke-width="1.5" fill="none"/></svg>
<div class="t" style="left:920.30px;top:768.71px;font-size:17px;color:#11171c;font-weight:400;font-family:'Liberation Sans', sans-serif;letter-spacing:0.55px;">Top-selling product</div>
<svg class="i" style="left:1092px;top:774.5px;" width="11" height="7" viewBox="0 0 11 7" fill="none"><path d="M1 1 L5.5 6 L10 1" stroke="#98a4ae" stroke-width="1.5" fill="none"/></svg>
<svg class="i" style="left:1132px;top:769.5px;" width="16" height="16" viewBox="0 0 16 16" fill="none"><path d="M8 0.5 V15.5 M0.5 8 H15.5" stroke="#11171c" stroke-width="1.6"/></svg>
<div class="b" style="left:632px;top:802.5px;width:1282px;height:1px;background:#e4e8ec;"></div>
<div class="b" style="left:632px;top:801.5px;width:151px;height:3px;background:#2272b4;"></div>
<svg class="i" style="left:1807.5px;top:768px;" width="20" height="20" viewBox="0 0 20 20" fill="none"><circle cx="8.7" cy="8.7" r="7.5" stroke="#5f7281" stroke-width="1.8" fill="none"/><path d="M14.2 14.2 L18.8 18.8" stroke="#5f7281" stroke-width="1.8"/></svg>
<svg class="i" style="left:1843.5px;top:768px;" width="19" height="19" viewBox="0 0 19 19" fill="none"><path d="M1.2 1.5 H17.8 L11.5 9.5 V17.5 H7.5 V9.5 Z" stroke="#5f7281" stroke-width="1.8" fill="none" stroke-linejoin="round"/></svg>
<svg class="i" style="left:1879.5px;top:768px;" width="18.5" height="18.5" viewBox="0 0 19 19" fill="none"><rect x="1" y="1" width="17" height="17" stroke="#5f7281" stroke-width="1.8" fill="none"/><path d="M6 1 V18" stroke="#5f7281" stroke-width="1.8"/></svg>
<div class="b" style="left:698.25px;top:804.5px;width:1px;height:323.0px;background:#e7e9eb;"></div>
<div class="b" style="left:888.9px;top:804.5px;width:1px;height:323.0px;background:#e7e9eb;"></div>
<div class="b" style="left:1065.5px;top:804.5px;width:1px;height:323.0px;background:#e7e9eb;"></div>
<div class="b" style="left:1240.9px;top:804.5px;width:1px;height:323.0px;background:#e7e9eb;"></div>
<div class="b" style="left:1465.5px;top:804.5px;width:1px;height:323.0px;background:#e7e9eb;"></div>
<div class="b" style="left:1650.0px;top:804.5px;width:1px;height:323.0px;background:#e7e9eb;"></div>
<div class="b" style="left:1800.9px;top:804.5px;width:1px;height:323.0px;background:#e7e9eb;"></div>
<div class="b" style="left:632px;top:841.0px;width:1282px;height:1px;background:#e7e9eb;"></div>
<div class="b" style="left:632px;top:872.74px;width:1282px;height:1px;background:#e7e9eb;"></div>
<div class="b" style="left:632px;top:904.48px;width:1282px;height:1px;background:#e7e9eb;"></div>
<div class="b" style="left:632px;top:936.22px;width:1282px;height:1px;background:#e7e9eb;"></div>
<div class="b" style="left:632px;top:967.96px;width:1282px;height:1px;background:#e7e9eb;"></div>
<div class="b" style="left:632px;top:999.7px;width:1282px;height:1px;background:#e7e9eb;"></div>
<div class="b" style="left:632px;top:1031.44px;width:1282px;height:1px;background:#e7e9eb;"></div>
<div class="b" style="left:632px;top:1063.18px;width:1282px;height:1px;background:#e7e9eb;"></div>
<div class="b" style="left:632px;top:1094.92px;width:1282px;height:1px;background:#e7e9eb;"></div>
<div class="b" style="left:632px;top:1126.6599999999999px;width:1282px;height:1px;background:#e7e9eb;"></div>
<svg class="i" style="left:710.5px;top:812.5px;" width="20" height="20" viewBox="0 0 20 20" fill="none"><text x="-0.2" y="15.6" font-family='Liberation Sans' font-weight='700' font-size='11.8' fill='#4a5866' stroke='#4a5866' stroke-width='0.35'>1</text><text x="5.7" y="9.2" font-family='Liberation Sans' font-weight='700' font-size='11.8' fill='#4a5866' stroke='#4a5866' stroke-width='0.35'>2</text><text x="11.6" y="18.4" font-family='Liberation Sans' font-weight='700' font-size='11.8' fill='#4a5866' stroke='#4a5866' stroke-width='0.35'>3</text></svg>
<div class="t" style="left:736.25px;top:815.74px;font-size:15.55px;color:#11171c;font-weight:700;font-family:'Liberation Sans', sans-serif;-webkit-text-stroke:0;">transactionID</div>
<svg class="i" style="left:901px;top:812.5px;" width="20" height="20" viewBox="0 0 20 20" fill="none"><text x="-0.2" y="15.6" font-family='Liberation Sans' font-weight='700' font-size='11.8' fill='#4a5866' stroke='#4a5866' stroke-width='0.35'>1</text><text x="5.7" y="9.2" font-family='Liberation Sans' font-weight='700' font-size='11.8' fill='#4a5866' stroke='#4a5866' stroke-width='0.35'>2</text><text x="11.6" y="18.4" font-family='Liberation Sans' font-weight='700' font-size='11.8' fill='#4a5866' stroke='#4a5866' stroke-width='0.35'>3</text></svg>
<div class="t" style="left:926.60px;top:815.74px;font-size:15.55px;color:#11171c;font-weight:700;font-family:'Liberation Sans', sans-serif;-webkit-text-stroke:0;">customerID</div>
<svg class="i" style="left:1077.5px;top:812.5px;" width="20" height="20" viewBox="0 0 20 20" fill="none"><text x="-0.2" y="15.6" font-family='Liberation Sans' font-weight='700' font-size='11.8' fill='#4a5866' stroke='#4a5866' stroke-width='0.35'>1</text><text x="5.7" y="9.2" font-family='Liberation Sans' font-weight='700' font-size='11.8' fill='#4a5866' stroke='#4a5866' stroke-width='0.35'>2</text><text x="11.6" y="18.4" font-family='Liberation Sans' font-weight='700' font-size='11.8' fill='#4a5866' stroke='#4a5866' stroke-width='0.35'>3</text></svg>
<div class="t" style="left:1102.80px;top:815.74px;font-size:15.55px;color:#11171c;font-weight:700;font-family:'Liberation Sans', sans-serif;-webkit-text-stroke:0;">franchiseID</div>
<svg class="i" style="left:1252.5px;top:811.5px;" width="20" height="21" viewBox="0 0 20 21" fill="none"><g stroke="#5f7281" stroke-width="1.7" fill="none"><path d="M8 19.5 H1.5 V3.5 H17.5 V9"/><path d="M1.5 8 H17.5 M5.5 1 V5 M13.5 1 V5"/><circle cx="14" cy="15.5" r="4.3"/><path d="M14 13.5 V15.8 L15.5 17"/></g></svg>
<div class="t" style="left:1277.70px;top:815.74px;font-size:15.55px;color:#11171c;font-weight:700;font-family:'Liberation Sans', sans-serif;-webkit-text-stroke:0;">dateTime</div>
<svg class="i" style="left:1477px;top:812.5px;" width="20" height="20" viewBox="0 0 20 20" fill="none"><text x="-0.3" y="15.6" font-family='Liberation Sans' font-weight='700' font-size='11.4' fill='#4a5866' stroke='#4a5866' stroke-width='0.35'>A</text><text x="6.4" y="9.2" font-family='Liberation Sans' font-weight='700' font-size='11.4' fill='#4a5866' stroke='#4a5866' stroke-width='0.35'>B</text><text x="12" y="18.4" font-family='Liberation Sans' font-weight='700' font-size='11.4' fill='#4a5866' stroke='#4a5866' stroke-width='0.35'>C</text></svg>
<div class="t" style="left:1502.60px;top:815.74px;font-size:15.55px;color:#11171c;font-weight:700;font-family:'Liberation Sans', sans-serif;-webkit-text-stroke:0;">product</div>
<svg class="i" style="left:1661.5px;top:812.5px;" width="20" height="20" viewBox="0 0 20 20" fill="none"><text x="-0.2" y="15.6" font-family='Liberation Sans' font-weight='700' font-size='11.8' fill='#4a5866' stroke='#4a5866' stroke-width='0.35'>1</text><text x="5.7" y="9.2" font-family='Liberation Sans' font-weight='700' font-size='11.8' fill='#4a5866' stroke='#4a5866' stroke-width='0.35'>2</text><text x="11.6" y="18.4" font-family='Liberation Sans' font-weight='700' font-size='11.8' fill='#4a5866' stroke='#4a5866' stroke-width='0.35'>3</text></svg>
<div class="t" style="left:1687.00px;top:815.74px;font-size:15.55px;color:#11171c;font-weight:700;font-family:'Liberation Sans', sans-serif;-webkit-text-stroke:0;">quantity</div>
<svg class="i" style="left:1812.5px;top:812.5px;" width="20" height="20" viewBox="0 0 20 20" fill="none"><text x="-0.2" y="15.6" font-family='Liberation Sans' font-weight='700' font-size='11.8' fill='#4a5866' stroke='#4a5866' stroke-width='0.35'>1</text><text x="5.7" y="9.2" font-family='Liberation Sans' font-weight='700' font-size='11.8' fill='#4a5866' stroke='#4a5866' stroke-width='0.35'>2</text><text x="11.6" y="18.4" font-family='Liberation Sans' font-weight='700' font-size='11.8' fill='#4a5866' stroke='#4a5866' stroke-width='0.35'>3</text></svg>
<div class="t" style="left:1838.00px;top:815.74px;font-size:15.55px;color:#11171c;font-weight:700;font-family:'Liberation Sans', sans-serif;-webkit-text-stroke:0;">unitPrice</div>
<div class="t" style="left:665.20px;top:850.48px;font-size:15.5px;color:#5f7281;font-weight:400;font-family:'Liberation Sans', sans-serif;transform:translateX(-50%);">1</div>
<div class="t" style="right:1041.40px;top:850.48px;font-size:15.5px;color:#11171c;font-weight:400;font-family:'Liberation Sans', sans-serif;text-align:right;letter-spacing:0.8px;">2002961</div>
<div class="t" style="right:864.10px;top:850.48px;font-size:15.5px;color:#11171c;font-weight:400;font-family:'Liberation Sans', sans-serif;text-align:right;letter-spacing:0.8px;">1000253</div>
<div class="t" style="right:689.00px;top:850.48px;font-size:15.5px;color:#11171c;font-weight:400;font-family:'Liberation Sans', sans-serif;text-align:right;letter-spacing:0.8px;">3000047</div>
<div class="t" style="left:1253.00px;top:850.48px;font-size:15.5px;color:#11171c;font-weight:400;font-family:'Liberation Sans', sans-serif;letter-spacing:0.9px;">2024-05-14T12:17:01.495</div>
<div class="t" style="left:1477.25px;top:850.39px;font-size:15.6px;color:#11171c;font-weight:400;font-family:'Liberation Sans', sans-serif;letter-spacing:0.25px;">Golden Gate Ginger</div>
<div class="t" style="right:129.00px;top:850.48px;font-size:15.5px;color:#11171c;font-weight:400;font-family:'Liberation Sans', sans-serif;text-align:right;letter-spacing:0.8px;">8</div>
<div class="t" style="left:665.20px;top:882.22px;font-size:15.5px;color:#5f7281;font-weight:400;font-family:'Liberation Sans', sans-serif;transform:translateX(-50%);">2</div>
<div class="t" style="right:1041.40px;top:882.22px;font-size:15.5px;color:#11171c;font-weight:400;font-family:'Liberation Sans', sans-serif;text-align:right;letter-spacing:0.8px;">2003007</div>
<div class="t" style="right:864.10px;top:882.22px;font-size:15.5px;color:#11171c;font-weight:400;font-family:'Liberation Sans', sans-serif;text-align:right;letter-spacing:0.8px;">1000226</div>
<div class="t" style="right:689.00px;top:882.22px;font-size:15.5px;color:#11171c;font-weight:400;font-family:'Liberation Sans', sans-serif;text-align:right;letter-spacing:0.8px;">3000047</div>
<div class="t" style="left:1253.00px;top:882.22px;font-size:15.5px;color:#11171c;font-weight:400;font-family:'Liberation Sans', sans-serif;letter-spacing:0.9px;">2024-05-10T23:10:10.239</div>
<div class="t" style="left:1477.25px;top:882.13px;font-size:15.6px;color:#11171c;font-weight:400;font-family:'Liberation Sans', sans-serif;letter-spacing:0.25px;">Austin Almond Biscotti</div>
<div class="t" style="right:129.00px;top:882.22px;font-size:15.5px;color:#11171c;font-weight:400;font-family:'Liberation Sans', sans-serif;text-align:right;letter-spacing:0.8px;">36</div>
<div class="t" style="left:665.20px;top:913.96px;font-size:15.5px;color:#5f7281;font-weight:400;font-family:'Liberation Sans', sans-serif;transform:translateX(-50%);">3</div>
<div class="t" style="right:1041.40px;top:913.96px;font-size:15.5px;color:#11171c;font-weight:400;font-family:'Liberation Sans', sans-serif;text-align:right;letter-spacing:0.8px;">2003017</div>
<div class="t" style="right:864.10px;top:913.96px;font-size:15.5px;color:#11171c;font-weight:400;font-family:'Liberation Sans', sans-serif;text-align:right;letter-spacing:0.8px;">1000108</div>
<div class="t" style="right:689.00px;top:913.96px;font-size:15.5px;color:#11171c;font-weight:400;font-family:'Liberation Sans', sans-serif;text-align:right;letter-spacing:0.8px;">3000047</div>
<div class="t" style="left:1253.00px;top:913.96px;font-size:15.5px;color:#11171c;font-weight:400;font-family:'Liberation Sans', sans-serif;letter-spacing:0.9px;">2024-05-16T16:34:10.613</div>
<div class="t" style="left:1477.25px;top:913.87px;font-size:15.6px;color:#11171c;font-weight:400;font-family:'Liberation Sans', sans-serif;letter-spacing:0.25px;">Austin Almond Biscotti</div>
<div class="t" style="right:129.00px;top:913.96px;font-size:15.5px;color:#11171c;font-weight:400;font-family:'Liberation Sans', sans-serif;text-align:right;letter-spacing:0.8px;">40</div>
<div class="t" style="left:665.20px;top:945.70px;font-size:15.5px;color:#5f7281;font-weight:400;font-family:'Liberation Sans', sans-serif;transform:translateX(-50%);">4</div>
<div class="t" style="right:1041.40px;top:945.70px;font-size:15.5px;color:#11171c;font-weight:400;font-family:'Liberation Sans', sans-serif;text-align:right;letter-spacing:0.8px;">2003068</div>
<div class="t" style="right:864.10px;top:945.70px;font-size:15.5px;color:#11171c;font-weight:400;font-family:'Liberation Sans', sans-serif;text-align:right;letter-spacing:0.8px;">1000173</div>
<div class="t" style="right:689.00px;top:945.70px;font-size:15.5px;color:#11171c;font-weight:400;font-family:'Liberation Sans', sans-serif;text-align:right;letter-spacing:0.8px;">3000047</div>
<div class="t" style="left:1253.00px;top:945.70px;font-size:15.5px;color:#11171c;font-weight:400;font-family:'Liberation Sans', sans-serif;letter-spacing:0.9px;">2024-05-02T04:31:51.612</div>
<div class="t" style="left:1477.25px;top:945.61px;font-size:15.6px;color:#11171c;font-weight:400;font-family:'Liberation Sans', sans-serif;letter-spacing:0.25px;">Pearly Pies</div>
<div class="t" style="right:129.00px;top:945.70px;font-size:15.5px;color:#11171c;font-weight:400;font-family:'Liberation Sans', sans-serif;text-align:right;letter-spacing:0.8px;">28</div>
<div class="t" style="left:665.20px;top:977.44px;font-size:15.5px;color:#5f7281;font-weight:400;font-family:'Liberation Sans', sans-serif;transform:translateX(-50%);">5</div>
<div class="t" style="right:1041.40px;top:977.44px;font-size:15.5px;color:#11171c;font-weight:400;font-family:'Liberation Sans', sans-serif;text-align:right;letter-spacing:0.8px;">2003103</div>
<div class="t" style="right:864.10px;top:977.44px;font-size:15.5px;color:#11171c;font-weight:400;font-family:'Liberation Sans', sans-serif;text-align:right;letter-spacing:0.8px;">1000075</div>
<div class="t" style="right:689.00px;top:977.44px;font-size:15.5px;color:#11171c;font-weight:400;font-family:'Liberation Sans', sans-serif;text-align:right;letter-spacing:0.8px;">3000047</div>
<div class="t" style="left:1253.00px;top:977.44px;font-size:15.5px;color:#11171c;font-weight:400;font-family:'Liberation Sans', sans-serif;letter-spacing:0.9px;">2024-05-04T23:44:26.902</div>
<div class="t" style="left:1477.25px;top:977.35px;font-size:15.6px;color:#11171c;font-weight:400;font-family:'Liberation Sans', sans-serif;letter-spacing:0.25px;">Pearly Pies</div>
<div class="t" style="right:129.00px;top:977.44px;font-size:15.5px;color:#11171c;font-weight:400;font-family:'Liberation Sans', sans-serif;text-align:right;letter-spacing:0.8px;">28</div>
<div class="t" style="left:665.20px;top:1009.18px;font-size:15.5px;color:#5f7281;font-weight:400;font-family:'Liberation Sans', sans-serif;transform:translateX(-50%);">6</div>
<div class="t" style="right:1041.40px;top:1009.18px;font-size:15.5px;color:#11171c;font-weight:400;font-family:'Liberation Sans', sans-serif;text-align:right;letter-spacing:0.8px;">2003147</div>
<div class="t" style="right:864.10px;top:1009.18px;font-size:15.5px;color:#11171c;font-weight:400;font-family:'Liberation Sans', sans-serif;text-align:right;letter-spacing:0.8px;">1000295</div>
<div class="t" style="right:689.00px;top:1009.18px;font-size:15.5px;color:#11171c;font-weight:400;font-family:'Liberation Sans', sans-serif;text-align:right;letter-spacing:0.8px;">3000047</div>
<div class="t" style="left:1253.00px;top:1009.18px;font-size:15.5px;color:#11171c;font-weight:400;font-family:'Liberation Sans', sans-serif;letter-spacing:0.9px;">2024-05-15T16:17:06.259</div>
<div class="t" style="left:1477.25px;top:1009.09px;font-size:15.6px;color:#11171c;font-weight:400;font-family:'Liberation Sans', sans-serif;letter-spacing:0.25px;">Austin Almond Biscotti</div>
<div class="t" style="right:129.00px;top:1009.18px;font-size:15.5px;color:#11171c;font-weight:400;font-family:'Liberation Sans', sans-serif;text-align:right;letter-spacing:0.8px;">32</div>
<div class="t" style="left:665.20px;top:1040.92px;font-size:15.5px;color:#5f7281;font-weight:400;font-family:'Liberation Sans', sans-serif;transform:translateX(-50%);">7</div>
<div class="t" style="right:1041.40px;top:1040.92px;font-size:15.5px;color:#11171c;font-weight:400;font-family:'Liberation Sans', sans-serif;text-align:right;letter-spacing:0.8px;">2003196</div>
<div class="t" style="right:864.10px;top:1040.92px;font-size:15.5px;color:#11171c;font-weight:400;font-family:'Liberation Sans', sans-serif;text-align:right;letter-spacing:0.8px;">1000237</div>
<div class="t" style="right:689.00px;top:1040.92px;font-size:15.5px;color:#11171c;font-weight:400;font-family:'Liberation Sans', sans-serif;text-align:right;letter-spacing:0.8px;">3000047</div>
<div class="t" style="left:1253.00px;top:1040.92px;font-size:15.5px;color:#11171c;font-weight:400;font-family:'Liberation Sans', sans-serif;letter-spacing:0.9px;">2024-05-07T11:13:22.469</div>
<div class="t" style="left:1477.25px;top:1040.83px;font-size:15.6px;color:#11171c;font-weight:400;font-family:'Liberation Sans', sans-serif;letter-spacing:0.25px;">Tokyo Tidbits</div>
<div class="t" style="right:129.00px;top:1040.92px;font-size:15.5px;color:#11171c;font-weight:400;font-family:'Liberation Sans', sans-serif;text-align:right;letter-spacing:0.8px;">40</div>
<div class="t" style="left:665.20px;top:1072.66px;font-size:15.5px;color:#5f7281;font-weight:400;font-family:'Liberation Sans', sans-serif;transform:translateX(-50%);">8</div>
<div class="t" style="right:1041.40px;top:1072.66px;font-size:15.5px;color:#11171c;font-weight:400;font-family:'Liberation Sans', sans-serif;text-align:right;letter-spacing:0.8px;">2003329</div>
<div class="t" style="right:864.10px;top:1072.66px;font-size:15.5px;color:#11171c;font-weight:400;font-family:'Liberation Sans', sans-serif;text-align:right;letter-spacing:0.8px;">1000272</div>
<div class="t" style="right:689.00px;top:1072.66px;font-size:15.5px;color:#11171c;font-weight:400;font-family:'Liberation Sans', sans-serif;text-align:right;letter-spacing:0.8px;">3000047</div>
<div class="t" style="left:1253.00px;top:1072.66px;font-size:15.5px;color:#11171c;font-weight:400;font-family:'Liberation Sans', sans-serif;letter-spacing:0.9px;">2024-05-06T03:32:16.017</div>
<div class="t" style="left:1477.25px;top:1072.57px;font-size:15.6px;color:#11171c;font-weight:400;font-family:'Liberation Sans', sans-serif;letter-spacing:0.25px;">Outback Oatmeal</div>
<div class="t" style="right:129.00px;top:1072.66px;font-size:15.5px;color:#11171c;font-weight:400;font-family:'Liberation Sans', sans-serif;text-align:right;letter-spacing:0.8px;">28</div>
<div class="t" style="left:665.20px;top:1104.40px;font-size:15.5px;color:#5f7281;font-weight:400;font-family:'Liberation Sans', sans-serif;transform:translateX(-50%);">9</div>
<div class="t" style="right:1041.40px;top:1104.40px;font-size:15.5px;color:#11171c;font-weight:400;font-family:'Liberation Sans', sans-serif;text-align:right;letter-spacing:0.8px;">2001264</div>
<div class="t" style="right:864.10px;top:1104.40px;font-size:15.5px;color:#11171c;font-weight:400;font-family:'Liberation Sans', sans-serif;text-align:right;letter-spacing:0.8px;">1000209</div>
<div class="t" style="right:689.00px;top:1104.40px;font-size:15.5px;color:#11171c;font-weight:400;font-family:'Liberation Sans', sans-serif;text-align:right;letter-spacing:0.8px;">3000047</div>
<div class="t" style="left:1253.00px;top:1104.40px;font-size:15.5px;color:#11171c;font-weight:400;font-family:'Liberation Sans', sans-serif;letter-spacing:0.9px;">2024-05-16T17:32:28.547</div>
<div class="t" style="left:1477.25px;top:1104.31px;font-size:15.6px;color:#11171c;font-weight:400;font-family:'Liberation Sans', sans-serif;letter-spacing:0.25px;">Pearly Pies</div>
<div class="t" style="right:129.00px;top:1104.40px;font-size:15.5px;color:#11171c;font-weight:400;font-family:'Liberation Sans', sans-serif;text-align:right;letter-spacing:0.8px;">28</div>
<div class="b" style="left:1303px;top:743.5px;width:493px;height:66.5px;background:#fff;border:1px solid #e8ebee;border-radius:6px;box-shadow:0 2px 8px rgba(17,23,28,0.10);"></div>
<div class="b" style="left:1314px;top:755px;width:313.5px;height:45px;background:#fff;border:1px solid #c0ccd6;border-radius:5px;"></div>
<div class="t" style="left:1330.40px;top:769.63px;font-size:16.5px;color:#5f7281;font-weight:400;font-family:'Liberation Sans', sans-serif;">Search</div>
<div class="t" style="left:1556.40px;top:769.21px;font-size:17px;color:#5f7281;font-weight:400;font-family:'Liberation Sans', sans-serif;">Aa</div>
<div class="t" style="left:1587.00px;top:769.21px;font-size:17px;color:#5f7281;font-weight:400;font-family:'Liberation Sans', sans-serif;text-decoration:underline;text-underline-offset:2px;">ab</div>
<div class="t" style="left:1638.70px;top:770.14px;font-size:15.9px;color:#5f7281;font-weight:400;font-family:'Liberation Sans', sans-serif;">No matches</div>
<svg class="i" style="left:1734px;top:770.5px;" width="16" height="16" viewBox="0 0 16 16" fill="none"><path d="M8 15.5 V1.5 M1.5 8 L8 1.5 L14.5 8" stroke="#a3aeb8" stroke-width="1.5" fill="none"/></svg>
<svg class="i" style="left:1764.5px;top:770.5px;" width="16" height="16" viewBox="0 0 16 16" fill="none"><path d="M8 0.5 V14.5 M1.5 8 L8 14.5 L14.5 8" stroke="#a3aeb8" stroke-width="1.5" fill="none"/></svg>
<svg class="i" style="left:651px;top:1153px;" width="17.5" height="17.5" viewBox="0 0 18 18" fill="none"><circle cx="9" cy="9" r="7.6" stroke="#2272b4" stroke-width="1.7" fill="none"/><path d="M8.6 4.8 V9.3 L11 11.3" stroke="#2272b4" stroke-width="1.7" fill="none"/></svg>
<div class="t" style="left:673.00px;top:1153.82px;font-size:17.1px;color:#2272b4;font-weight:400;font-family:'Liberation Sans', sans-serif;">1 s 263 ms | 10 rows returned</div>
<div class="t" style="right:38.40px;top:1153.21px;font-size:17px;color:#11171c;font-weight:400;font-family:'Liberation Sans', sans-serif;text-align:right;">Refreshed <b>33 seconds ago</b></div>
</body></html>
